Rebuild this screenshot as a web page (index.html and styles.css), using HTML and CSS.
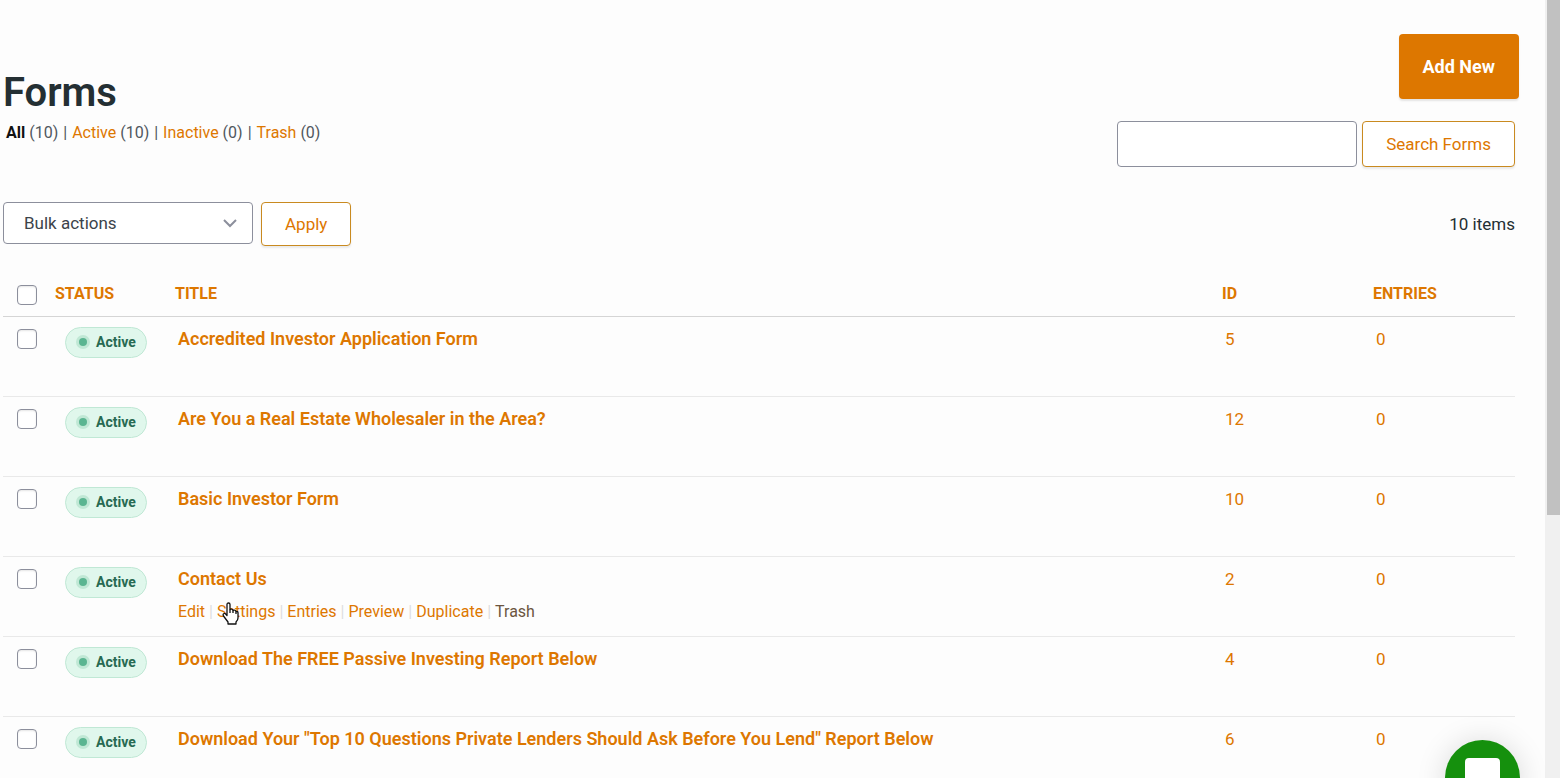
FILE: index.html
```html
<!DOCTYPE html>
<html lang="en">
<head>
    <meta charset="UTF-8">
    <meta name="viewport" content="width=device-width, initial-scale=1.0">
    <title>Forms</title>
    <link rel="stylesheet" href="styles.css">
</head>
<body>
    <main class="page">
        <header class="page-header">
            <div class="heading">
                <h1>Forms</h1>
                <ul class="filters">
                    <li><a href="#" class="current">All</a> (10)</li>
                    <li><a href="#">Active</a> (10)</li>
                    <li><a href="#">Inactive</a> (0)</li>
                    <li><a href="#">Trash</a> (0)</li>
                </ul>
            </div>
            <div class="header-actions">
                <button type="button" class="add-new">Add New</button>
                <form class="search">
                    <input type="text" aria-label="Search Forms">
                    <button type="button" class="btn">Search Forms</button>
                </form>
            </div>
        </header>

        <div class="toolbar">
            <select aria-label="Bulk actions">
                <option>Bulk actions</option>
                <option>Delete</option>
            </select>
            <button type="button" class="btn">Apply</button>
            <span class="count">10 items</span>
        </div>

        <table class="forms">
            <thead>
                <tr>
                    <th class="col-check"><input type="checkbox" aria-label="Select all"></th>
                    <th class="col-status"><a href="#">STATUS</a></th>
                    <th class="col-title"><a href="#">TITLE</a></th>
                    <th class="col-id"><a href="#">ID</a></th>
                    <th class="col-entries"><a href="#">ENTRIES</a></th>
                </tr>
            </thead>
            <tbody>
                <tr>
                    <td class="col-check"><input type="checkbox" aria-label="Select Accredited Investor Application Form"></td>
                    <td class="col-status"><button type="button" class="badge">Active</button></td>
                    <td><a href="#" class="form-title">Accredited Investor Application Form</a></td>
                    <td><a href="#">5</a></td>
                    <td><a href="#">0</a></td>
                </tr>
                <tr>
                    <td class="col-check"><input type="checkbox" aria-label="Select Are You a Real Estate Wholesaler"></td>
                    <td class="col-status"><button type="button" class="badge">Active</button></td>
                    <td><a href="#" class="form-title">Are You a Real Estate Wholesaler in the Area?</a></td>
                    <td><a href="#">12</a></td>
                    <td><a href="#">0</a></td>
                </tr>
                <tr>
                    <td class="col-check"><input type="checkbox" aria-label="Select Basic Investor Form"></td>
                    <td class="col-status"><button type="button" class="badge">Active</button></td>
                    <td><a href="#" class="form-title">Basic Investor Form</a></td>
                    <td><a href="#">10</a></td>
                    <td><a href="#">0</a></td>
                </tr>
                <tr>
                    <td class="col-check"><input type="checkbox" aria-label="Select Contact Us"></td>
                    <td class="col-status"><button type="button" class="badge">Active</button></td>
                    <td>
                        <a href="#" class="form-title">Contact Us</a>
                        <div class="row-actions">
                            <a href="#">Edit</a>
                            <a href="#">Settings</a>
                            <a href="#">Entries</a>
                            <a href="#">Preview</a>
                            <a href="#">Duplicate</a>
                            <a href="#" class="trash">Trash</a>
                            <svg class="pointer" width="18" height="23" viewBox="0 0 18 23" fill="#fff" stroke="#111" stroke-width="1.3" stroke-linejoin="round">
                                <path d="M5 13V2.500Q5 1 6.500 1T8 2.500V7.500Q10.500 6.500 11 8.500Q13.500 7.500 14 9.500Q16 9 16 11V16Q16 18 14 20V22H6V20L1.500 14Q.5 12 2 11.500Q3 11 5 13.500Z"/>
                                <path d="M8 7.500V11M11 8.500V11M14 9.500V12" fill="none"/>
                            </svg>
                        </div>
                    </td>
                    <td><a href="#">2</a></td>
                    <td><a href="#">0</a></td>
                </tr>
                <tr>
                    <td class="col-check"><input type="checkbox" aria-label="Select Download The FREE Passive Investing Report"></td>
                    <td class="col-status"><button type="button" class="badge">Active</button></td>
                    <td><a href="#" class="form-title">Download The FREE Passive Investing Report Below</a></td>
                    <td><a href="#">4</a></td>
                    <td><a href="#">0</a></td>
                </tr>
                <tr>
                    <td class="col-check"><input type="checkbox" aria-label="Select Download Your Top 10 Questions"></td>
                    <td class="col-status"><button type="button" class="badge">Active</button></td>
                    <td><a href="#" class="form-title">Download Your "Top 10 Questions Private Lenders Should Ask Before You Lend" Report Below</a></td>
                    <td><a href="#">6</a></td>
                    <td><a href="#">0</a></td>
                </tr>
            </tbody>
        </table>
    </main>

    <div class="scrollbar"><div class="thumb"></div></div>

    <button type="button" class="chat" aria-label="Open chat">
        <svg width="35" height="40" viewBox="0 0 35 40" fill="#fff"><path d="M4 0H31Q35 0 35 4V40L26 34H4Q0 34 0 30V4Q0 0 4 0Z"/></svg>
    </button>
</body>
</html>
```
FILE: styles.css
```css
* {
    box-sizing: border-box;
}

body {
    margin: 0;
    height: 100vh;
    display: flex;
    overflow: hidden;
    background-color: #fdfdfd;
    color: #242f33;
    font-family: Roboto, Arial, sans-serif;
    font-size: 17px;
    line-height: 24px;
}

a {
    color: #dd7700;
    text-decoration: none;
}

button, input, select {
    font: inherit;
}

.page {
    flex: 1;
    padding: 34px 30px 0 3px;
}

.page-header {
    display: flex;
    justify-content: space-between;
}

.heading {
    padding-top: 35px;
}

h1 {
    margin: 0;
    font-size: 40px;
    line-height: 48px;
    font-weight: 600;
}

.filters {
    display: flex;
    margin: 4px 0 0;
    padding: 0 3px;
    list-style: none;
    font-size: 16px;
    color: #50575e;
}

.filters li + li::before {
    content: "|";
    margin: 0 5px;
}

.filters .current {
    color: #111;
    font-weight: 700;
}

.header-actions {
    display: flex;
    flex-direction: column;
    align-items: flex-end;
    gap: 22px;
}

.add-new {
    height: 65px;
    margin-right: -4px;
    padding: 0 24px;
    border: 0;
    border-radius: 4px;
    background-color: #dd7700;
    color: white;
    font-size: 18px;
    font-weight: 700;
    box-shadow: 0 2px 2px rgba(0, 0, 0, 0.1);
}

.search {
    display: flex;
    gap: 5px;
}

.search input {
    width: 240px;
    height: 46px;
    border: 1px solid #8c8f9c;
    border-radius: 4px;
    background-color: white;
}

.btn {
    padding: 0 23px;
    border: 1px solid #c98a20;
    border-radius: 4px;
    background-color: white;
    color: #dd7700;
    box-shadow: 0 2px 2px rgba(0, 0, 0, 0.08);
}

.toolbar {
    display: flex;
    align-items: flex-start;
    gap: 8px;
    margin-top: 35px;
}

.toolbar .btn {
    height: 44px;
}

.toolbar select {
    appearance: none;
    width: 250px;
    height: 42px;
    padding: 0 20px;
    border: 1px solid #8c8f9c;
    border-radius: 4px;
    color: #3c434a;
    background: white url("data:image/svg+xml,%3Csvg xmlns='http://www.w3.org/2000/svg' width='14' height='9'%3E%3Cpath d='M1 1l6 6 6-6' fill='none' stroke='%238c8f9c' stroke-width='2'/%3E%3C/svg%3E") no-repeat right 15px center;
}

.count {
    margin-left: auto;
    line-height: 44px;
}

.forms {
    width: 100%;
    margin-top: 25px;
    border-collapse: collapse;
    table-layout: fixed;
}

.forms th {
    height: 45px;
    padding: 2px 0 0;
    border-bottom: 1px solid #d5d5d5;
    text-align: left;
    font-size: 16px;
    font-weight: 700;
}

.forms td {
    height: 80px;
    padding: 10px 3px 0;
    border-bottom: 1px solid #e9e9e9;
    vertical-align: top;
}

.col-check {
    width: 52px;
}

.col-status {
    width: 120px;
}

.col-id {
    width: 151px;
}

.col-entries {
    width: 142px;
}

.forms td.col-check, .forms th.col-check {
    padding-left: 14px;
}

.forms td.col-status {
    padding-left: 10px;
}

input[type="checkbox"] {
    appearance: none;
    display: block;
    width: 20px;
    height: 20px;
    margin: 2px 0 0;
    border: 1px solid #8c8f9c;
    border-radius: 4px;
    background-color: white;
    box-shadow: inset 0 1px 2px rgba(0, 0, 0, 0.1);
}

.badge {
    display: flex;
    align-items: center;
    gap: 9px;
    height: 31px;
    padding: 0 10px;
    border: 1px solid #c0e8d5;
    border-radius: 16px;
    background-color: #e0f7ec;
    color: #276a52;
    font-size: 14px;
    font-weight: 700;
}

.badge::before {
    content: "";
    width: 8px;
    height: 8px;
    margin-left: 3px;
    border-radius: 50%;
    background-color: #5bb591;
    box-shadow: 0 0 0 3px #c0e8d5;
}

.form-title {
    font-size: 18px;
    font-weight: 600;
}

.row-actions {
    display: flex;
    position: relative;
    margin-top: 9px;
    font-size: 16px;
}

.row-actions a + a::before {
    content: "|";
    margin: 0 4px;
    color: #ddd;
}

.row-actions .trash {
    color: #6b5540;
}

/* pointer over the Settings link */
.pointer {
    position: absolute;
    left: 44px;
    top: 2px;
}

.scrollbar {
    width: 15px;
    padding-left: 2px;
    background-color: #f0f0f0;
}

.thumb {
    height: 66.2%;
    background-color: #c1c1c1;
}

.chat {
    position: fixed;
    right: 40px;
    bottom: -37px;
    width: 75px;
    height: 75px;
    padding: 18px 0 0;
    display: flex;
    justify-content: center;
    border: 0;
    border-radius: 50%;
    background-color: #15900d;
    box-shadow: 0 2px 30px rgba(0, 0, 0, 0.15);
}
```
